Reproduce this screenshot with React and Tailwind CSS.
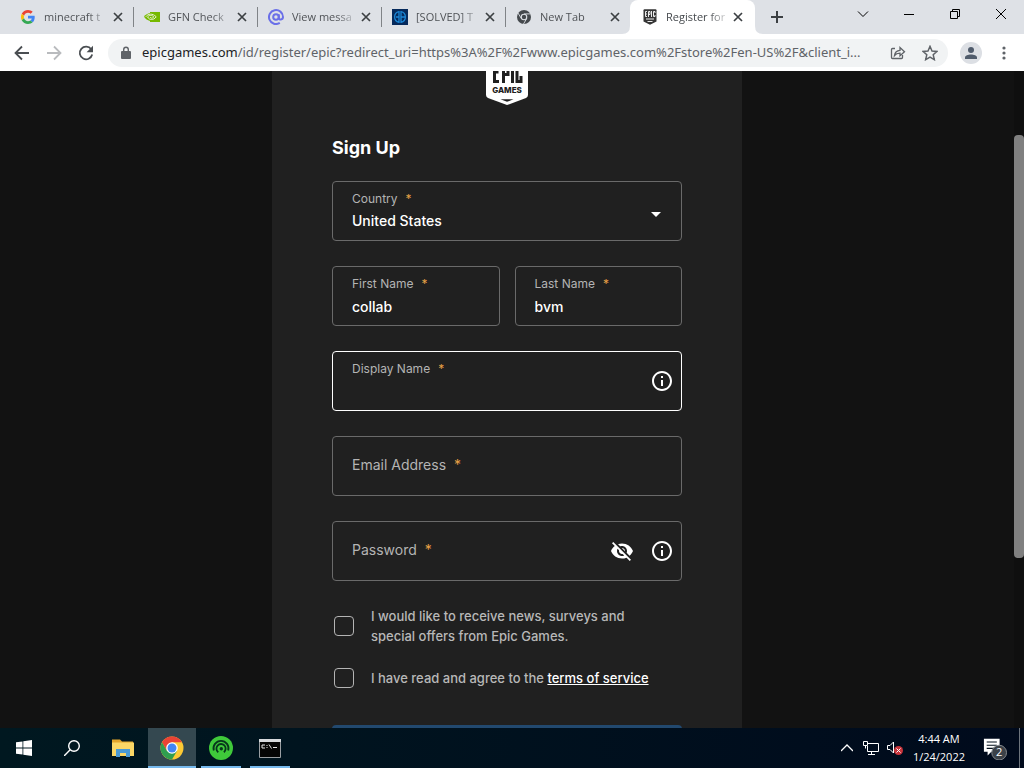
import React from "react";

const stroke = { fill: "none", stroke: "currentColor" };

function GoogleIcon() {
  return (
    <svg viewBox="0 0 48 48" className="size-4 shrink-0 p-px">
      <path fill="#EA4335" d="M24 9.5c3.54 0 6.71 1.22 9.21 3.6l6.85-6.85C35.9 2.38 30.47 0 24 0 14.62 0 6.51 5.38 2.56 13.22l7.98 6.19C12.43 13.72 17.74 9.5 24 9.5z" />
      <path fill="#4285F4" d="M46.98 24.55c0-1.57-.15-3.09-.38-4.55H24v9.02h12.94c-.58 2.96-2.26 5.48-4.78 7.18l7.73 6c4.51-4.18 7.09-10.36 7.09-17.65z" />
      <path fill="#FBBC05" d="M10.53 28.59c-.48-1.45-.76-2.99-.76-4.59s.27-3.14.76-4.59l-7.98-6.19C.92 16.46 0 20.12 0 24c0 3.88.92 7.54 2.56 10.78l7.97-6.19z" />
      <path fill="#34A853" d="M24 48c6.48 0 11.93-2.13 15.89-5.81l-7.73-6c-2.15 1.45-4.92 2.3-8.16 2.3-6.26 0-11.57-4.22-13.47-9.91l-7.98 6.19C6.51 42.62 14.62 48 24 48z" />
    </svg>
  );
}

function NvidiaIcon() {
  return (
    <svg viewBox="0 0 16 16" className="size-4 shrink-0">
      <path fill="#76b900" d="M6 3h10v10H6z" />
      <path fill="#76b900" d="M0 7.8C1.5 5.6 3.600 4.300 6 4v7.900C3.500 11.500 1.400 10 0 7.800z" />
      <g fill="none" stroke="#e8f2d4" strokeWidth="1">
        <path d="M1.800 7.800C4 4.600 8.500 4 12.200 7.800 9.500 11.600 5 11.200 3.600 7.900 5.400 5.800 8 5.900 9.800 7.900 8.500 9.600 6.800 9.600 6 8" />
      </g>
    </svg>
  );
}

function AtIcon() {
  return (
    <svg viewBox="0 0 16 16" className="size-4 shrink-0" fill="none" stroke="#6b70e8" strokeWidth="2">
      <circle cx="8" cy="8" r="2.800" />
      <path d="M10.800 5.200v3.600c0 2.600 4.200 2.200 4.200-.8a7 7 0 1 0-3.200 5.900" />
    </svg>
  );
}

function SolvedIcon() {
  return (
    <svg viewBox="0 0 16 16" className="size-4 shrink-0">
      <path fill="#062a5c" d="M0 0h16v16H0z" />
      <g fill="none" stroke="#1b87d6" strokeWidth="1.300">
        <path d="M7 2.700a5.400 5.400 0 0 0 0 10.600zM9 2.700a5.400 5.400 0 0 1 0 10.600z" />
        <path d="M4 8h3M9 8h4" />
      </g>
    </svg>
  );
}

function ChromeGreyIcon() {
  return (
    <svg viewBox="0 0 16 16" className="size-4 shrink-0">
      <circle cx="8" cy="8" r="7" fill="#45494d" />
      <circle cx="8" cy="8" r="3.300" fill="#dee1e6" />
      <circle cx="8" cy="8" r="2.200" fill="#45494d" />
      <path d="M8 4.900h6.600M5.300 9.500 2 4M10.700 9.500 7.500 15" stroke="#dee1e6" strokeWidth=".9" />
    </svg>
  );
}

function EpicTabIcon() {
  return (
    <svg viewBox="0 0 16 16" className="size-4 shrink-0">
      <path fill="#353535" d="M1.500 1.200q0-1 1-1h11q1 0 1 1v11.400L8 15.800 1.500 12.600z" />
      <g fill="none" stroke="#fff" strokeWidth=".9">
        <path d="M5 2.500H3.500v5H5M3.500 5H5M6.500 8V2.500H8v3H6.500M9.500 2v6M13 4V2.500h-1.500v5H13V6M4 10h8M5.500 12.500h5" />
      </g>
    </svg>
  );
}

const tabs = [
  { title: "minecraft t", icon: GoogleIcon },
  { title: "GFN Check", icon: NvidiaIcon },
  { title: "View messa", icon: AtIcon },
  { title: "[SOLVED] T", icon: SolvedIcon },
  { title: "New Tab", icon: ChromeGreyIcon },
  { title: "Register for", icon: EpicTabIcon, active: true },
];

function Tab({ title, icon: Icon, active, divider }) {
  return (
    <div
      className={
        "relative flex min-w-0 items-center " +
        (active ? "w-[125px] rounded-t-lg bg-white px-3 text-[#45494d]" : "w-[124px] px-2.5 text-[#505357]")
      }
    >
      {active && (
        <>
          <svg viewBox="0 0 8 8" className="absolute bottom-0 -left-2 size-2" fill="#fff"><path d="M8 0v8H0q8 0 8-8z" /></svg>
          <svg viewBox="0 0 8 8" className="absolute -right-2 bottom-0 size-2" fill="#fff"><path d="M0 0v8h8Q0 8 0 0z" /></svg>
        </>
      )}
      <Icon />
      <span className="ml-2 min-w-0 flex-1 whitespace-nowrap text-[11px] [mask-image:linear-gradient(to_right,black_70%,transparent_105%)]">
        {title}
      </span>
      <button aria-label={"Close " + title} className="ml-1.5 shrink-0 text-[#3c4043]">
        <svg viewBox="0 0 10 10" className="size-2.5" {...stroke} strokeWidth="1.700">
          <path d="m1 1 8 8M9 1 1 9" />
        </svg>
      </button>
      {divider && <span className="-mr-2.5 ml-2.5 h-5 w-px shrink-0 bg-[#808387]" />}
    </div>
  );
}

function TabStrip() {
  return (
    <header className="flex h-[34px] shrink-0 bg-[#dee1e6]">
      <div className="flex min-w-0 pl-2.5">
        {tabs.map((t, i) => (
          <Tab key={t.title} {...t} divider={i < 4} />
        ))}
      </div>
      <button aria-label="New tab" className="flex w-11 items-center justify-center text-[#3c4043]">
        <svg viewBox="0 0 12 12" className="size-3" {...stroke} strokeWidth="2">
          <path d="M6 0v12M0 6h12" />
        </svg>
      </button>
      <div className="ml-auto flex h-7 text-black">
        <button aria-label="Search tabs" className="flex w-[46px] items-center justify-center">
          <svg viewBox="0 0 12 12" className="size-3" {...stroke}><path d="m1 3.500 5 5 5-5" /></svg>
        </button>
        <button aria-label="Minimize" className="flex w-[46px] items-center justify-center">
          <svg viewBox="0 0 10 10" className="size-2.5" {...stroke}><path d="M0 5.500h10" /></svg>
        </button>
        <button aria-label="Restore" className="flex w-[46px] items-center justify-center">
          <svg viewBox="0 0 10 10" className="size-2.5" {...stroke}><path d="M.5 2.500h7v7h-7zM2.500 2.500v-2h7v7h-2" /></svg>
        </button>
        <button aria-label="Close window" className="flex w-[46px] items-center justify-center">
          <svg viewBox="0 0 10 10" className="size-2.5" {...stroke}><path d="m0 0 10 10M10 0 0 10" /></svg>
        </button>
      </div>
    </header>
  );
}

function Toolbar() {
  return (
    <nav className="flex h-[37px] shrink-0 items-center bg-white pl-1.5 text-[#5f6368]">
      <button aria-label="Back" className="flex w-8 justify-center text-[#4a4e52]">
        <svg viewBox="0 0 16 16" className="size-4" {...stroke} strokeWidth="1.800"><path d="M15 8H2M8 1.500 1.500 8 8 14.500" /></svg>
      </button>
      <button aria-label="Forward" className="flex w-8 justify-center text-[#b9bbbe]">
        <svg viewBox="0 0 16 16" className="size-4" {...stroke} strokeWidth="1.800"><path d="M1 8h13M8 1.500 14.500 8 8 14.500" /></svg>
      </button>
      <button aria-label="Reload" className="flex w-8 justify-center text-[#4a4e52]">
        <svg viewBox="0 0 16 16" className="size-4">
          <path {...stroke} strokeWidth="1.800" d="M13.200 4.300A6.300 6.300 0 1 0 14.200 9.500" />
          <path fill="currentColor" d="M15 .8v6.400H8.600z" />
        </svg>
      </button>
      <div className="ml-1.5 flex h-7 min-w-0 flex-1 items-center rounded-full bg-[#f1f3f4] pr-2.5 pl-3">
        <svg viewBox="0 0 12 14" className="mr-2.5 h-3.5 w-3 shrink-0">
          <path fill="#5f6368" d="M2 5h8q1 0 1 1v6q0 1-1 1H2q-1 0-1-1V6q0-1 1-1z" />
          <path {...stroke} stroke="#5f6368" strokeWidth="1.400" d="M3.700 5V3.500a2.300 2.300 0 0 1 4.600 0V5" />
        </svg>
        <p className="min-w-0 flex-1 truncate font-['Noto_Sans','Open_Sans',sans-serif] text-[13px]">
          <span className="text-[#202124]">epicgames.com</span>
          /id/register/epic?redirect_uri=https%3A%2F%2Fwww.epicgames.com%2Fstore%2Fen-US%2F&amp;client_i...
        </p>
        <button aria-label="Share this page" className="ml-3.5">
          <svg viewBox="0 0 16 16" className="size-4" {...stroke} strokeWidth="1.300">
            <path d="M5 3.500H2.500q-1 0-1 1v8q0 1 1 1h9q1 0 1-1V10" />
            <path d="M4.500 10.500C5 7 7 5.500 10 5.300V2.500l4.500 4.300-4.500 4V8.200c-2.500 0-4.200.6-5.500 2.300z" />
          </svg>
        </button>
        <button aria-label="Bookmark this tab" className="ml-4">
          <svg viewBox="0 0 24 24" className="size-4" {...stroke} strokeWidth="2.200">
            <path d="m12 2 3 7 7.500.6-5.700 5 1.700 7.400-6.500-3.900L5.500 22l1.700-7.400-5.700-5L9 9z" />
          </svg>
        </button>
      </div>
      <button aria-label="Profile" className="ml-3 flex size-[22px] items-center justify-center rounded-full bg-[#dcdfe4] text-[#4f5b6b]">
        <svg viewBox="0 0 12 12" className="size-3" fill="currentColor"><circle cx="6" cy="3" r="3" /><path d="M0 12V10.500C0 6.500 12 6.500 12 10.500V12z" /></svg>
      </button>
      <button aria-label="Chrome menu" className="mr-3 ml-3.5 flex w-4 justify-center">
        <svg viewBox="0 0 4 14" className="h-3.5 w-1" fill="currentColor"><circle cx="2" cy="2" r="1.600" /><circle cx="2" cy="7" r="1.600" /><circle cx="2" cy="12" r="1.600" /></svg>
      </button>
    </nav>
  );
}

function Star() {
  return <span className="ml-2 text-[#e8a046]">*</span>;
}

function Field({ id, label, value, type = "text", floating = true, focused, children }) {
  return (
    <div className={"grid h-[60px] w-full min-w-0 rounded-sm border " + (focused ? "border-white" : "border-[#6a6a6a]")}>
      <input
        id={id}
        type={type}
        defaultValue={value}
        className="col-start-1 row-start-1 size-full bg-transparent px-[19px] pt-5 text-sm font-medium text-white outline-none"
      />
      <label
        htmlFor={id}
        className={
          "pointer-events-none col-start-1 row-start-1 px-[19px] leading-5 text-[#b4b4b4] " +
          (floating ? "mt-[7px] self-start text-xs" : "mb-0.5 self-center text-sm leading-5")
        }
      >
        {label}
        <Star />
      </label>
      {children && (
        <div className="col-start-1 row-start-1 mr-[7px] flex items-center gap-4 self-center justify-self-end text-white">{children}</div>
      )}
    </div>
  );
}

function InfoButton({ label }) {
  return (
    <button type="button" aria-label={label}>
      <svg viewBox="0 0 24 24" className="size-6" fill="currentColor">
        <path d="M11 7h2v2h-2zm0 4h2v6h-2zm1-9C6.480 2 2 6.480 2 12s4.480 10 10 10 10-4.480 10-10S17.520 2 12 2zm0 18c-4.410 0-8-3.590-8-8s3.590-8 8-8 8 3.590 8 8-3.590 8-8 8z" />
      </svg>
    </button>
  );
}

function SignUp() {
  return (
    <main className="flex min-h-0 flex-1 overflow-hidden bg-[#121212]">
      <div className="flex min-w-0 flex-1 justify-center">
        <section className="flex w-full max-w-[470px] flex-col bg-[#202020] px-[60px] font-[Inter,Roboto,sans-serif]">
          <div className="flex h-[34px] shrink-0 items-end justify-center overflow-hidden">
            <svg viewBox="0 0 42 50" className="h-[50px] w-[42px] shrink-0" role="img" aria-label="Epic Games">
              <path fill="#fff" d="M0 3q0-3 3-3h36q3 0 3 3v37q0 2-2 3L21 50 2 43q-2-1-2-3z" />
              <path fill="#202020" d="M14.500 44.300h13L21 46.800z" />
              <g fill="none" stroke="#202020" strokeWidth="3">
                <path d="M13 7.500H8.500v19H13M8.500 17h4M17.500 28V7.500H22v12h-4M26.500 6v22M35 13V7.500h-4v19h4V21" />
              </g>
              <text x="21" y="38" textAnchor="middle" fill="#202020" className="font-[Inter,sans-serif] text-[8px] font-extrabold">GAMES</text>
            </svg>
          </div>
          <h1 className="mt-[31px] text-lg leading-6 font-bold text-white">Sign Up</h1>
          <form className="mt-[21px] flex flex-col gap-[25px]">
            <div className="grid h-[60px] rounded-sm border border-[#6a6a6a]">
              <select
                id="country"
                className="col-start-1 row-start-1 size-full appearance-none bg-transparent px-[19px] pt-5 text-sm font-medium text-white outline-none"
              >
                <option>United States</option>
              </select>
              <label htmlFor="country" className="pointer-events-none col-start-1 row-start-1 mt-[7px] self-start px-[19px] text-xs leading-5 text-[#b4b4b4]">
                Country
                <Star />
              </label>
              <svg viewBox="0 0 10 5" className="pointer-events-none col-start-1 row-start-1 mt-1.5 mr-5 h-[5px] w-2.5 self-center justify-self-end" fill="#fff">
                <path d="M0 0h10L5 5z" />
              </svg>
            </div>
            <div className="flex gap-[15px]">
              <Field id="first" label="First Name" value="collab" />
              <Field id="last" label="Last Name" value="bvm" />
            </div>
            <Field id="display" label="Display Name" focused>
              <InfoButton label="About display names" />
            </Field>
            <Field id="email" label="Email Address" type="email" floating={false} />
            <Field id="password" label="Password" type="password" floating={false}>
              <button type="button" aria-label="Show password">
                <svg viewBox="0 0 24 24" className="size-6" fill="currentColor">
                  <path d="M12 7c2.760 0 5 2.240 5 5 0 .65-.13 1.260-.36 1.830l2.920 2.920c1.510-1.260 2.700-2.890 3.430-4.750-1.730-4.390-6-7.500-11-7.500-1.400 0-2.740.25-3.980.7l2.160 2.160C10.740 7.130 11.350 7 12 7zM2 4.270l2.280 2.280.46.46C3.080 8.300 1.780 10.020 1 12c1.730 4.390 6 7.500 11 7.500 1.550 0 3.030-.3 4.380-.84l.42.42L19.730 22 21 20.730 3.270 3 2 4.270zM7.530 9.800l1.550 1.550c-.05.21-.08.43-.08.65 0 1.660 1.340 3 3 3 .22 0 .44-.03.65-.08l1.550 1.550c-.67.33-1.410.53-2.200.53-2.760 0-5-2.240-5-5 0-.79.2-1.530.53-2.200zm4.310-.78l3.150 3.150.02-.16c0-1.660-1.340-3-3-3l-.17.01z" />
                </svg>
              </button>
              <InfoButton label="Password requirements" />
            </Field>
            <div className="flex flex-col gap-[22px] px-0.5 text-[13px] leading-5 font-medium text-[#b8b8b8]">
              <div className="flex items-center gap-[17px]">
                <input id="news" type="checkbox" className="size-5 shrink-0 appearance-none rounded-sm border border-[#b4b4b4]" />
                <label htmlFor="news" className="max-w-[280px]">I would like to receive news, surveys and special offers from Epic Games.</label>
              </div>
              <div className="flex items-center gap-[17px]">
                <input id="terms" type="checkbox" className="size-5 shrink-0 appearance-none rounded-sm border border-[#b4b4b4]" />
                <p>
                  <label htmlFor="terms">I have read and agree to the </label>
                  <a href="#terms" className="text-white underline">terms of service</a>
                </p>
              </div>
            </div>
            <button type="submit" aria-label="Continue" className="mt-3 h-[60px] rounded bg-[#22496f]" />
          </form>
        </section>
      </div>
      <div className="flex w-2.5 shrink-0 flex-col bg-[#0f0f0f] pt-16">
        <div className="h-[423px] rounded-sm bg-[#808080]" />
      </div>
    </main>
  );
}

function TaskButton({ label, running, active, children }) {
  return (
    <button aria-label={label} className={"grid h-full w-12 place-items-center " + (active ? "bg-[#344850]" : "")}>
      <span className="col-start-1 row-start-1">{children}</span>
      {running && <span className={"col-start-1 row-start-1 h-0.5 self-end bg-[#76b9ed] " + (active ? "w-full" : "w-10")} />}
    </button>
  );
}

function Taskbar() {
  return (
    <footer className="flex h-10 shrink-0 items-center bg-gradient-to-r from-[#001820] to-[#000a1c] text-white">
      <TaskButton label="Start">
        <svg viewBox="0 0 16 16" className="size-4" fill="#fff"><path d="M0 2.300 6.500 1.400v6.200H0zM7.300 1.300 16 0v7.600H7.300zM0 8.400h6.500v6.200L0 13.700zM7.300 8.400H16V16l-8.700-1.300z" /></svg>
      </TaskButton>
      <TaskButton label="Search">
        <svg viewBox="0 0 16 16" className="size-4" {...stroke} strokeWidth="1.400"><circle cx="10" cy="6" r="5.300" /><path d="M6.200 9.800 0 16" /></svg>
      </TaskButton>
      <div className="ml-[3px] flex h-full gap-px">
        <TaskButton label="File Explorer">
          <svg viewBox="0 0 22 20" className="h-5 w-[22px]">
            <path fill="#e3a52b" d="M0 1.500h8l2 2h11v5H0z" />
            <path fill="#fbd766" d="M0 4.500h22V18H0z" />
            <path fill="#4a9ad4" d="M4 11h14v8h-4v-4H8v4H4z" />
          </svg>
        </TaskButton>
        <TaskButton label="Google Chrome" running active>
          <svg viewBox="0 0 24 24" className="size-6">
            <circle cx="12" cy="12" r="11.500" fill="#fcc934" />
            <path fill="#ea4335" d="M2 6.300A11.500 11.500 0 0 1 22 6.300H12L7 15z" />
            <path fill="#2f9e50" d="M2 6.300A11.500 11.500 0 0 0 12 23.500L17 15 7 15z" />
            <circle cx="12" cy="12" r="5.800" fill="#fff" />
            <circle cx="12" cy="12" r="4.500" fill="#4285f4" />
          </svg>
        </TaskButton>
        <TaskButton label="Razer Cortex" running>
          <svg viewBox="0 0 24 24" className="size-6">
            <circle cx="12" cy="12" r="12" fill="#3fc93a" />
            <g fill="none" stroke="#07361c" strokeWidth="1.800">
              <path d="M4.800 14.500a7.500 7.500 0 1 1 14.400 0" />
              <path d="M9.300 16.300a4.600 4.600 0 1 1 5.600-.1" />
            </g>
            <circle cx="12.300" cy="12.700" r="1.700" fill="#07361c" />
          </svg>
        </TaskButton>
        <TaskButton label="Command Prompt" running>
          <svg viewBox="0 0 22 19" className="h-[19px] w-[22px]">
            <path fill="#050505" stroke="#9b9fa3" d="M.5.500h21v18H.5z" />
            <path fill="#d7dadd" d="M0 0h22v3H0z" />
            <path {...stroke} stroke="#e5e5e5" d="M6 6H3v3h3M8 6v1M8 8v1M10 5.500l2.500 4M14 8.500h4" />
          </svg>
        </TaskButton>
      </div>
      <div className="ml-auto flex h-full items-center">
        <button aria-label="Show hidden icons"><svg viewBox="0 0 12 12" className="size-3" {...stroke} strokeWidth="1.300"><path d="m0 9 6-6 6 6" /></svg></button>
        <button aria-label="Network" className="ml-2.5">
          <svg viewBox="0 0 16 14" className="h-3.5 w-4" {...stroke}><path d="M5 2.500h10.500v8H4.500V5M.5.500h4v4h-4zM2.500 4.500v3M8.500 10.500v3M5 13.500h7" /></svg>
        </button>
        <button aria-label="Volume muted" className="ml-2">
          <svg viewBox="0 0 16 14" className="h-3.5 w-4"><path {...stroke} d="M.5 4.500H3L6.500 1v11L3 8.500H.5z" /><circle cx="11.500" cy="9.500" r="4.500" fill="#c9343b" /><path {...stroke} d="m9.500 7.500 4 4M13.500 7.500l-4 4" /></svg>
        </button>
        <button className="ml-2.5 flex flex-col items-center text-[11px] leading-[18px]">
          <span>4:44 AM</span>
          <span>1/24/2022</span>
        </button>
        <button aria-label="2 notifications" className="ml-[18px]">
          <svg viewBox="0 0 26 26" className="size-6">
            <path fill="#fff" d="M1 3h17v14H9l-4 4v-4H1z" />
            <path stroke="#03101c" strokeWidth="1.300" d="M4 6.500h11M4 10h11M4 13.500h8" />
            <circle cx="17.500" cy="18" r="8" fill="#3b4148" stroke="#8b8f94" />
            <text x="17.500" y="22" textAnchor="middle" fill="#fff" className="text-[12px]">2</text>
          </svg>
        </button>
        <span className="mr-1 ml-3 h-full w-px bg-[#6d747c]" />
      </div>
    </footer>
  );
}

export default function App() {
  return (
    <div className="flex h-screen flex-col font-['Open_Sans','Noto_Sans',sans-serif]">
      <TabStrip />
      <Toolbar />
      <SignUp />
      <Taskbar />
    </div>
  );
}
